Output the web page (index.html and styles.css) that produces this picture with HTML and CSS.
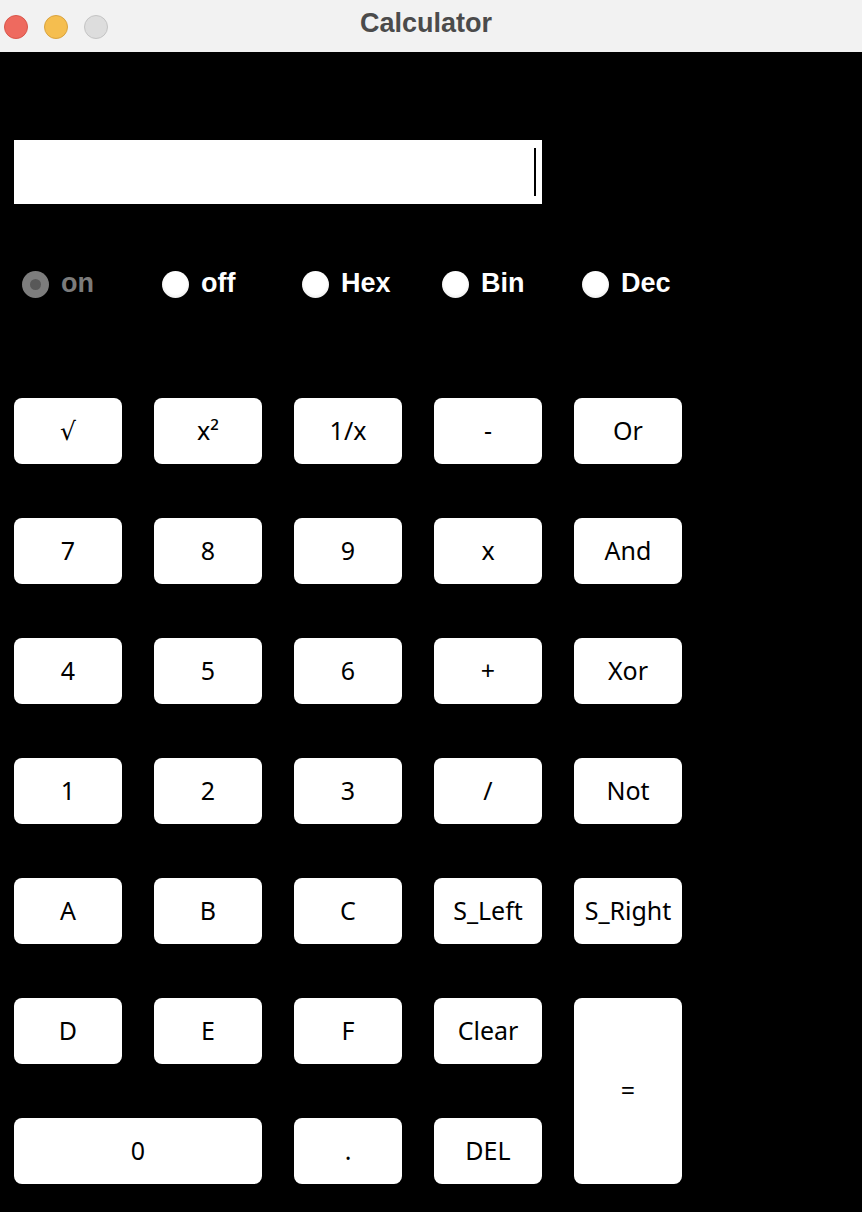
FILE: index.html
```html
<!DOCTYPE html>
<html>
<head>
<meta charset="utf-8">
<title>Calculator</title>
<link rel="stylesheet" href="styles.css">
</head>
<body>
<div class="window">
  <div class="titlebar">
    <div class="lights">
      <span class="light red"></span>
      <span class="light yellow"></span>
      <span class="light gray"></span>
    </div>
    <div class="title">Calculator</div>
  </div>
  <div class="content">
    <div class="display"><span class="caret"></span></div>
    <div class="radios">
      <label class="radio disabled"><span class="dot"></span><span class="rlabel">on</span></label>
      <label class="radio"><span class="dot"></span><span class="rlabel">off</span></label>
      <label class="radio"><span class="dot"></span><span class="rlabel">Hex</span></label>
      <label class="radio"><span class="dot"></span><span class="rlabel">Bin</span></label>
      <label class="radio"><span class="dot"></span><span class="rlabel">Dec</span></label>
    </div>
    <div class="keys">
      <div class="key">√</div>
      <div class="key">x²</div>
      <div class="key">1/x</div>
      <div class="key">-</div>
      <div class="key">Or</div>

      <div class="key">7</div>
      <div class="key">8</div>
      <div class="key">9</div>
      <div class="key">x</div>
      <div class="key">And</div>

      <div class="key">4</div>
      <div class="key">5</div>
      <div class="key">6</div>
      <div class="key">+</div>
      <div class="key">Xor</div>

      <div class="key">1</div>
      <div class="key">2</div>
      <div class="key">3</div>
      <div class="key">/</div>
      <div class="key">Not</div>

      <div class="key">A</div>
      <div class="key">B</div>
      <div class="key">C</div>
      <div class="key">S_Left</div>
      <div class="key">S_Right</div>

      <div class="key">D</div>
      <div class="key">E</div>
      <div class="key">F</div>
      <div class="key">Clear</div>
      <div class="key equals">=</div>

      <div class="key zero">0</div>
      <div class="key">.</div>
      <div class="key">DEL</div>
    </div>
  </div>
</div>
</body>
</html>
```
FILE: styles.css
```css
html, body {
  margin: 0;
  padding: 0;
  background: #000;
}
.window {
  width: 862px;
  height: 1212px;
  background: #000;
  overflow: hidden;
}
.titlebar {
  height: 52px;
  background: #f2f2f2;
  display: flex;
  align-items: center;
  position: relative;
}
.lights {
  display: flex;
  gap: 16px;
  padding-left: 4px;
  margin-top: 1px;
}
.light {
  width: 22px;
  height: 22px;
  border-radius: 50%;
  border: 1px solid transparent;
}
.light.red { background: #ee6a5f; border-color: #d9564b; }
.light.yellow { background: #f5be4f; border-color: #d9a33f; }
.light.gray { background: #dddddd; border-color: #c4c4c4; }
.title {
  position: absolute;
  left: 0;
  right: 0;
  top: 0;
  height: 46px;
  line-height: 46px;
  text-align: center;
  font-family: "Liberation Sans", Arial, sans-serif;
  font-weight: bold;
  font-size: 27px;
  color: #4b4b4b;
  padding-left: 130px;
  padding-right: 140px;
  pointer-events: none;
}
.content {
  padding: 88px 0 0 14px;
}
.display {
  width: 528px;
  height: 64px;
  background: #fff;
  display: flex;
  justify-content: flex-end;
  align-items: center;
  box-sizing: border-box;
  padding-right: 6px;
}
.caret {
  width: 2px;
  height: 48px;
  background: #000;
}
.radios {
  display: grid;
  grid-template-columns: repeat(5, 140px);
  margin-top: 60px;
  padding-left: 8px;
  height: 38px;
  align-items: center;
}
.radio {
  display: flex;
  align-items: center;
  gap: 12px;
  font-family: "Liberation Sans", Arial, sans-serif;
  font-weight: bold;
  font-size: 27px;
  color: #fff;
}
.dot {
  width: 27px;
  height: 27px;
  border-radius: 50%;
  background: radial-gradient(circle at 50% 45%, #ffffff 55%, #e4e4e4 85%, #c8c8c8 100%);
  position: relative;
  margin-top: 2px;
}
.radio.disabled { color: #7b7b7b; }
.radio.disabled .dot {
  background: #7d7d7d;
}
.radio.disabled .dot::after {
  content: "";
  position: absolute;
  left: 8px;
  top: 8px;
  width: 11px;
  height: 11px;
  border-radius: 50%;
  background: #585858;
}
.keys {
  display: grid;
  grid-template-columns: repeat(5, 108px);
  grid-auto-rows: 66px;
  column-gap: 32px;
  row-gap: 54px;
  margin-top: 96px;
}
.key {
  background: #fff;
  border-radius: 8px;
  display: flex;
  align-items: center;
  justify-content: center;
  font-family: "Noto Sans", "DejaVu Sans", sans-serif;
  font-size: 25px;
  color: #000;
  padding-bottom: 3px;
  box-sizing: border-box;
}
.key.equals {
  grid-column: 5;
  grid-row: 6 / span 2;
}
.key.zero {
  grid-column: 1 / span 2;
}
```
